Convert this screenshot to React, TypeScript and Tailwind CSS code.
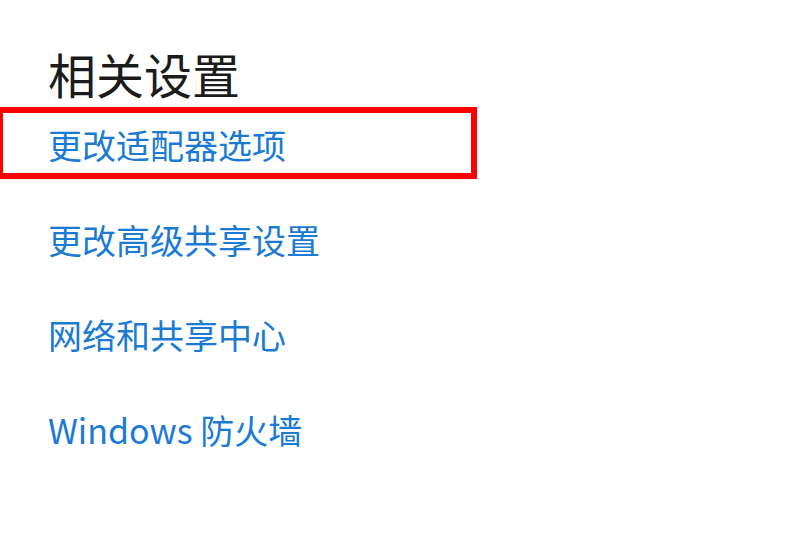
const links = ['更改适配器选项', '更改高级共享设置', '网络和共享中心', 'Windows 防火墙'];

export default function App() {
  return (
    <div
      className="w-[800px] h-[551px] bg-white overflow-hidden pl-[48px] pt-[48px]"
      style={{ fontFamily: '"Noto Sans CJK SC", "Noto Sans", sans-serif' }}
    >
      {/* Heading */}
      <h2 className="h-[50px] leading-[50px] text-[48px] text-[#1b1b1b] font-normal">相关设置</h2>

      {/* Links */}
      <div className="flex flex-col -mt-[1px]">
        {links.map((label, i) => (
          <div key={label} className="relative h-[95px] flex items-center">
            {i === 0 && (
              <div className="absolute left-[-51px] top-[10px] w-[480px] h-[72px] border-[6px] border-[#ff0000]" />
            )}
            <a className="text-[34px] leading-none text-[#1a7ad4] cursor-pointer">{label}</a>
          </div>
        ))}
      </div>
    </div>
  );
}
